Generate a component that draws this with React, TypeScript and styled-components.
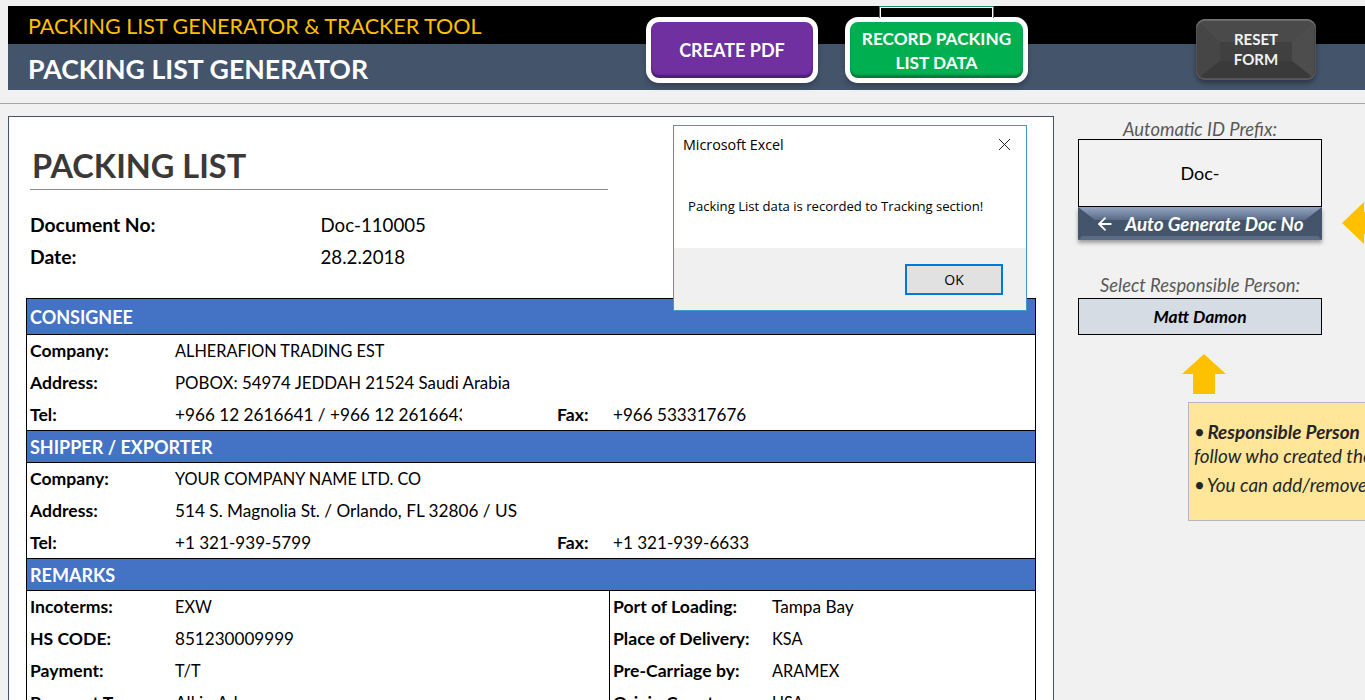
import React from "react";
import styled, { createGlobalStyle } from "styled-components";
import { X, ArrowLeft } from "lucide-react";

const GlobalStyle = createGlobalStyle`
  html, body {
    margin: 0;
    background: #f1f1f1;
  }
  * {
    box-sizing: border-box;
  }
`;

const font = `"Lato", "Open Sans", sans-serif`;
const systemFont = `"Open Sans", "Noto Sans", sans-serif`;

const Page = styled.div`
  position: relative;
  width: 1365px;
  height: 700px;
  padding-top: 6px;
  overflow: hidden;
  font-family: ${font};
  color: #000;
`;

const Header = styled.header`
  position: relative;
  margin-left: 8px;
`;

const TopBand = styled.div`
  height: 38px;
  padding-left: 20px;
  background: #000;
  color: #ffc000;
  font-size: 21.5px;
  line-height: 40px;
`;

const TitleBand = styled.div`
  height: 46px;
  padding-left: 20px;
  background: #44546a;
  color: #fff;
  font-size: 26.7px;
  font-weight: 700;
  line-height: 50px;
`;

const Actions = styled.div`
  position: absolute;
  top: 11px;
  left: 638px;
  display: flex;
  align-items: flex-start;
  gap: 27px;
`;

const MacroButton = styled.button<{ $bg: string; $dark: string; $width: number }>`
  width: ${(p) => p.$width}px;
  height: 66px;
  padding: 0;
  border: 5px solid #fff;
  border-radius: 13px;
  background: ${(p) => p.$bg};
  box-shadow: inset 0 -3px 2px ${(p) => p.$dark}, 0 4px 5px rgba(0, 0, 0, 0.2);
  color: #fff;
  font-family: ${font};
  font-size: 18px;
  font-weight: 700;
  line-height: 25px;
`;

const RecordButton = styled(MacroButton)`
  padding-top: 2px;
  font-size: 17.2px;
  line-height: 24px;
`;

const RecordWrap = styled.div`
  position: relative;
`;

const Stub = styled.div`
  position: absolute;
  top: -11px;
  left: 34px;
  width: 115px;
  height: 12px;
  border: 1px solid #1f8a5f;
  border-bottom: 0;
  box-shadow: inset 1px 1px 0 #fff, inset -1px 0 0 #fff;
`;

const ResetButton = styled.button`
  position: relative;
  width: 120px;
  height: 61px;
  margin: 2px 0 0 141px;
  padding: 0 0 2px;
  border: 0;
  border-radius: 9px;
  background: #404040;
  box-shadow: inset 0 2px 2px #767676, inset 0 -2px 2px #5c5c5c, 0 3px 5px rgba(0, 0, 0, 0.35);
  color: #f2f2f2;
  font-family: ${font};
  font-size: 15px;
  font-weight: 700;
  line-height: 20px;

  &::before {
    content: "";
    position: absolute;
    inset: 2px;
    border-style: solid;
    border-width: 21px 22px 17px;
    border-color: #4a4a4a #4d4d4d #3a3a3a #464646;
    border-radius: 7px;
  }
`;

const ResetLabel = styled.span`
  position: relative;
`;

const Rule = styled.div`
  height: 1px;
  margin-top: 13px;
  background: #a6a6a6;
`;

const Main = styled.main`
  display: flex;
  align-items: flex-start;
  gap: 24px;
  padding: 12px 0 0 8px;
`;

const Sheet = styled.section`
  flex: none;
  width: 1046px;
  height: 600px;
  padding: 0 17px;
  border: 1px solid #44546a;
  border-bottom: 0;
  background: #fff;
  overflow: hidden;
`;

const TitleBlock = styled.div`
  display: flex;
  align-items: flex-end;
  width: 578px;
  height: 73px;
  margin-left: 4px;
  padding: 0 0 1px 2px;
  border-bottom: 1px solid #8c8c8c;
  color: #3b3838;
  font-size: 32.5px;
  font-weight: 700;
  line-height: 44px;
`;

const MetaList = styled.div`
  margin: 19px 0 25px 4px;
`;

const MetaRow = styled.div`
  display: grid;
  grid-template-columns: 290.5px 1fr;
  align-items: center;
  height: 32px;
  font-size: 18.7px;
`;

const MetaLabel = styled.span`
  margin-top: -2px;
  font-size: 19.3px;
  font-weight: 700;
`;

const Table = styled.div`
  height: 500px;
  border: 1px solid #000;
  border-bottom: 0;
`;

const SectionBand = styled.div<{ $first?: boolean }>`
  display: flex;
  align-items: center;
  height: ${(p) => (p.$first ? 36 : 33)}px;
  padding-left: 3px;
  border-top: ${(p) => (p.$first ? 0 : 1)}px solid #000;
  border-bottom: 1px solid #000;
  background: #4472c4;
  color: #fff;
  font-size: 18px;
  font-weight: 700;
`;

const InfoBlock = styled.div`
  display: grid;
  grid-template-rows: 32px 32px 31px;
`;

const InfoRow = styled.div`
  display: grid;
  grid-template-columns: 145px 382px 56px 1fr;
  align-items: center;
  padding-left: 3px;
  font-size: 17.1px;
  white-space: nowrap;

  &:not(:last-child) {
    padding-bottom: 2px;
  }
`;

const Label = styled.span`
  font-size: 17.6px;
  font-weight: 700;
`;

const Caps = styled.span`
  font-size: 16.3px;
`;

const Mixed = styled.span<{ $size?: number }>`
  font-size: ${(p) => p.$size ?? 17.2}px;
`;

const Clipped = styled.span`
  width: 287px;
  overflow: hidden;
  font-size: 17.2px;
`;

const Remarks = styled.div`
  display: grid;
  grid-template-columns: 583px 1fr;
`;

const RemarksColumn = styled.div<{ $divider?: boolean }>`
  border-right: ${(p) => (p.$divider ? "1px solid #000" : "0")};
`;

const RemarkRow = styled.div<{ $labelWidth: number }>`
  display: grid;
  grid-template-columns: ${(p) => p.$labelWidth}px 1fr;
  align-items: center;
  height: 32px;
  padding: 0 0 2px 3px;
  font-size: 17.1px;
  white-space: nowrap;
`;

const Side = styled.aside`
  flex: none;
  width: 244px;
`;

const FieldCaption = styled.div`
  height: 23px;
  color: #595959;
  font-size: 18.4px;
  font-style: italic;
  line-height: 26px;
  text-align: center;
  white-space: nowrap;
`;

const PrefixBox = styled.div`
  display: flex;
  align-items: center;
  justify-content: center;
  height: 68px;
  border: 1px solid #000;
  background: #f2f2f2;
  font-size: 18px;
`;

const AutoRow = styled.div`
  display: flex;
  align-items: flex-start;
  width: 300px;
  height: 65px;
`;

const AutoButton = styled.button`
  position: relative;
  display: flex;
  align-items: center;
  flex: none;
  gap: 10px;
  width: 244px;
  height: 33px;
  padding: 0 0 0 17px;
  border: 0;
  background: #44546a;
  box-shadow: 0 3px 4px rgba(0, 0, 0, 0.35);
  color: #fff;
  font-family: ${font};
  font-size: 18.8px;
  font-style: italic;
  font-weight: 700;
  white-space: nowrap;

  &::before {
    content: "";
    position: absolute;
    top: 0;
    left: 0;
    right: 0;
    height: 13px;
    background: linear-gradient(#93a5c1, #5a6b86);
    clip-path: polygon(0 0, 100% 0, calc(100% - 17px) 100%, 17px 100%);
  }

  &::after {
    content: "";
    position: absolute;
    bottom: 0;
    left: 0;
    right: 0;
    height: 4px;
    background: #5a6b86;
    clip-path: polygon(4px 0, calc(100% - 4px) 0, 100% 100%, 0 100%);
  }

  & > * {
    position: relative;
    z-index: 1;
  }
`;

const PersonBox = styled.div`
  display: flex;
  align-items: center;
  justify-content: center;
  height: 37px;
  margin-top: 3px;
  border: 1px solid #000;
  background: #d6dce4;
  font-size: 17.4px;
  font-style: italic;
  font-weight: 700;
`;

const UpArrow = styled.svg`
  display: block;
  margin: 19px 0 8px 104px;
`;

const LeftArrow = styled.svg`
  flex: none;
  margin: -5px 0 0 20px;
`;

const Note = styled.div`
  width: 400px;
  height: 119px;
  margin-left: 110px;
  padding: 17px 0 0 5px;
  border: 1px solid #b4b7c0;
  background: #ffe699;
  color: #262626;
  font-size: 18.9px;
  font-style: italic;
  line-height: 24px;
  white-space: nowrap;
`;

const NoteGap = styled.div`
  margin-top: 5px;
`;

const Bullet = styled.span`
  margin-right: -2px;
`;

const Dialog = styled.div`
  position: absolute;
  top: 125px;
  left: 673px;
  display: flex;
  flex-direction: column;
  width: 354px;
  height: 186px;
  border: 1px solid #3d9bd0;
  background: #fff;
  font-family: ${systemFont};
`;

const DialogTitle = styled.div`
  display: flex;
  align-items: center;
  justify-content: space-between;
  height: 37px;
  padding: 0 11px 0 9px;
  font-size: 14.3px;
`;

const DialogBody = styled.div`
  flex: 1;
  padding: 34px 0 0 14px;
  font-size: 13.1px;
`;

const DialogFooter = styled.div`
  display: flex;
  justify-content: flex-end;
  height: 62px;
  padding: 16px 23px 0 0;
  background: #f0f0f0;
`;

const OkButton = styled.button`
  width: 98px;
  height: 31px;
  border: 2px solid #0078d7;
  background: #e1e1e1;
  font-family: ${systemFont};
  font-size: 14px;
`;

export default function App() {
  return (
    <Page>
      <GlobalStyle />
      <Header>
        <TopBand>PACKING LIST GENERATOR &amp; TRACKER TOOL</TopBand>
        <TitleBand>PACKING LIST GENERATOR</TitleBand>
        <Actions>
          <MacroButton $bg="#7030a0" $dark="#4b1f6f" $width={172}>
            CREATE PDF
          </MacroButton>
          <RecordWrap>
            <Stub />
            <RecordButton $bg="#00b050" $dark="#007a38" $width={183}>
              RECORD PACKING
              <br />
              LIST DATA
            </RecordButton>
          </RecordWrap>
          <ResetButton>
            <ResetLabel>
              RESET
              <br />
              FORM
            </ResetLabel>
          </ResetButton>
        </Actions>
      </Header>
      <Rule />
      <Main>
        <Sheet>
          <TitleBlock>PACKING LIST</TitleBlock>
          <MetaList>
            <MetaRow>
              <MetaLabel>Document No:</MetaLabel>
              <span>Doc-110005</span>
            </MetaRow>
            <MetaRow>
              <MetaLabel>Date:</MetaLabel>
              <span>28.2.2018</span>
            </MetaRow>
          </MetaList>
          <Table>
            <SectionBand $first>CONSIGNEE</SectionBand>
            <InfoBlock>
              <InfoRow>
                <Label>Company:</Label>
                <Caps>ALHERAFION TRADING EST</Caps>
              </InfoRow>
              <InfoRow>
                <Label>Address:</Label>
                <Mixed $size={16.85}>POBOX: 54974 JEDDAH 21524 Saudi Arabia</Mixed>
              </InfoRow>
              <InfoRow>
                <Label>Tel:</Label>
                <Clipped>+966 12 2616641 / +966 12 2616643</Clipped>
                <Label>Fax:</Label>
                <span>+966 533317676</span>
              </InfoRow>
            </InfoBlock>
            <SectionBand>SHIPPER / EXPORTER</SectionBand>
            <InfoBlock>
              <InfoRow>
                <Label>Company:</Label>
                <Caps>YOUR COMPANY NAME LTD. CO</Caps>
              </InfoRow>
              <InfoRow>
                <Label>Address:</Label>
                <Mixed>514 S. Magnolia St. / Orlando, FL 32806 / US</Mixed>
              </InfoRow>
              <InfoRow>
                <Label>Tel:</Label>
                <span>+1 321-939-5799</span>
                <Label>Fax:</Label>
                <span>+1 321-939-6633</span>
              </InfoRow>
            </InfoBlock>
            <SectionBand>REMARKS</SectionBand>
            <Remarks>
              <RemarksColumn $divider>
                <RemarkRow $labelWidth={145}>
                  <Label>Incoterms:</Label>
                  <Caps>EXW</Caps>
                </RemarkRow>
                <RemarkRow $labelWidth={145}>
                  <Label>HS CODE:</Label>
                  <span>851230009999</span>
                </RemarkRow>
                <RemarkRow $labelWidth={145}>
                  <Label>Payment:</Label>
                  <Caps>T/T</Caps>
                </RemarkRow>
                <RemarkRow $labelWidth={145}>
                  <Label>Payment Terms:</Label>
                  <Mixed>All in Advance</Mixed>
                </RemarkRow>
              </RemarksColumn>
              <RemarksColumn>
                <RemarkRow $labelWidth={159}>
                  <Label>Port of Loading:</Label>
                  <Mixed>Tampa Bay</Mixed>
                </RemarkRow>
                <RemarkRow $labelWidth={159}>
                  <Label>Place of Delivery:</Label>
                  <Caps>KSA</Caps>
                </RemarkRow>
                <RemarkRow $labelWidth={159}>
                  <Label>Pre-Carriage by:</Label>
                  <Caps>ARAMEX</Caps>
                </RemarkRow>
                <RemarkRow $labelWidth={159}>
                  <Label>Origin Country:</Label>
                  <Caps>USA</Caps>
                </RemarkRow>
              </RemarksColumn>
            </Remarks>
          </Table>
        </Sheet>
        <Side>
          <FieldCaption>Automatic ID Prefix:</FieldCaption>
          <PrefixBox>Doc-</PrefixBox>
          <AutoRow>
            <AutoButton>
              <ArrowLeft size={20} strokeWidth={2.2} />
              <span>Auto Generate Doc No</span>
            </AutoButton>
            <LeftArrow width="24" height="42" viewBox="0 0 24 42">
              <path d="M0 21 22 0V10H24V32H22V42Z" fill="#ffc000" />
            </LeftArrow>
          </AutoRow>
          <FieldCaption>Select Responsible Person:</FieldCaption>
          <PersonBox>Matt Damon</PersonBox>
          <UpArrow width="44" height="40" viewBox="0 0 44 40">
            <path d="M22 0 44 20H33V40H11V20H0Z" fill="#ffc000" />
          </UpArrow>
          <Note>
            <div>
              <Bullet>•</Bullet> <b>Responsible Person</b>
            </div>
            <div>follow who created the</div>
            <NoteGap>
              <Bullet>•</Bullet> You can add/remove
            </NoteGap>
          </Note>
        </Side>
      </Main>
      <Dialog>
        <DialogTitle>
          Microsoft Excel
          <X size={21} strokeWidth={1} />
        </DialogTitle>
        <DialogBody>Packing List data is recorded to Tracking section!</DialogBody>
        <DialogFooter>
          <OkButton>OK</OkButton>
        </DialogFooter>
      </Dialog>
    </Page>
  );
}
